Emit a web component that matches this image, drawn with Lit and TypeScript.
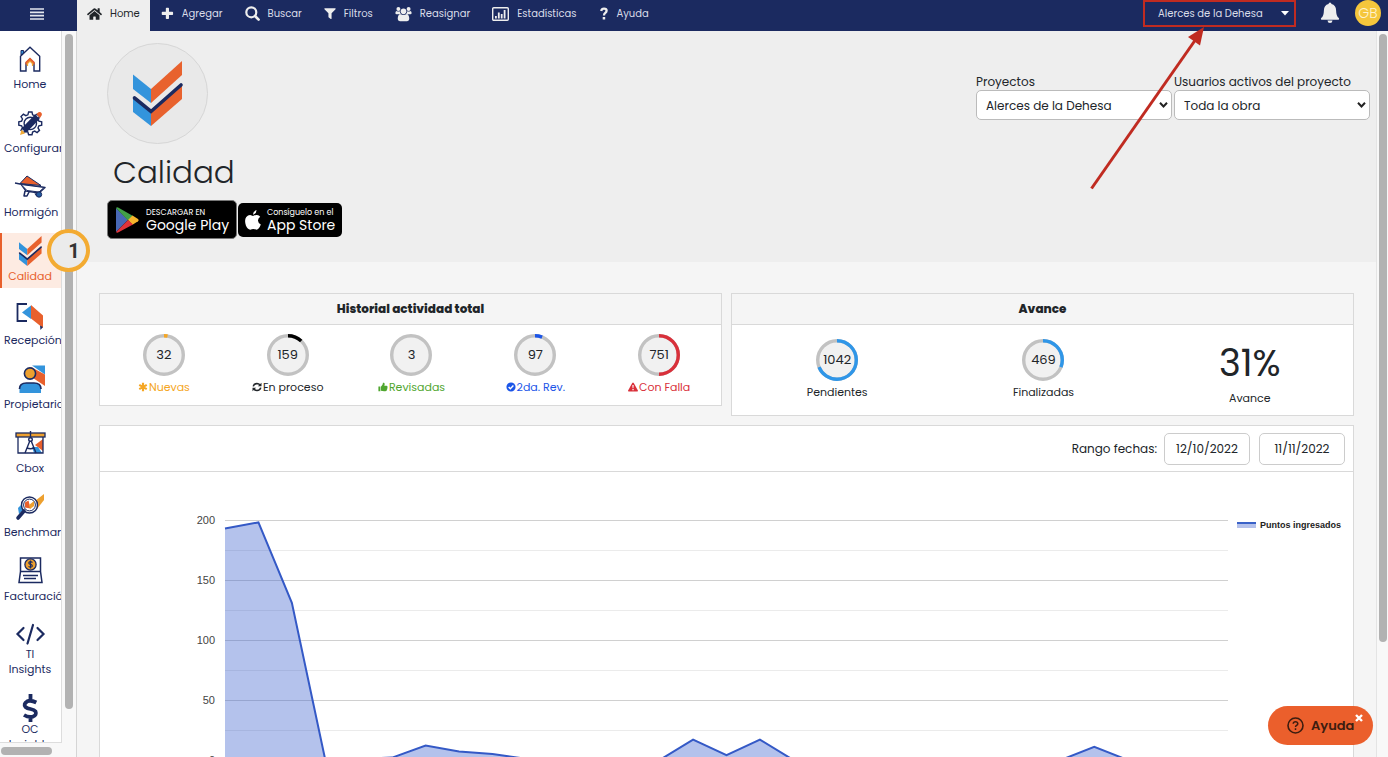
import { LitElement, html, css, svg } from "lit";
import { customElement } from "lit/decorators.js";
import { classMap } from "lit/directives/class-map.js";

const navy = "#1b2a60";
const blue = "#3394dc";
const orange = "#e8602c";
const amber = "#eda02f";

const tabIcon = (w: number, h: number, box: string, body: unknown) =>
  html`<svg width=${w} height=${h} viewBox=${box} fill="currentColor" aria-hidden="true">${body}</svg>`;

const homeIcon = tabIcon(15, 14, "0 0 576 512", svg`<path d="M280.37 148.26L96 300.11V464a16 16 0 0 0 16 16l112.06-.29a16 16 0 0 0 15.92-16V368a16 16 0 0 1 16-16h64a16 16 0 0 1 16 16v95.64a16 16 0 0 0 16 16.05L464 480a16 16 0 0 0 16-16V300L295.67 148.26a12.19 12.19 0 0 0-15.3 0zM571.6 251.47L488 182.56V44.05a12 12 0 0 0-12-12h-56a12 12 0 0 0-12 12v72.61L318.47 43a48 48 0 0 0-61 0L4.34 251.47a12 12 0 0 0-1.6 16.9l25.5 31A12 12 0 0 0 45.15 301l235.22-193.74a12.19 12.19 0 0 1 15.3 0L530.9 301a12 12 0 0 0 16.9-1.6l25.5-31a12 12 0 0 0-1.7-16.93z"/>`);
const plusIcon = tabIcon(13, 13, "0 0 14 14", svg`<path d="M5.2 1.600q0-.8.8-.8h1.800q.8 0 .8.8v3.600h3.600q.8 0 .8.8v1.800q0 .8-.8.8H8.600v3.600q0 .8-.8.8H6q-.8 0-.8-.8V8.600H1.600q-.8 0-.8-.8V6q0-.8.8-.8h3.600z"/>`);
const searchIcon = tabIcon(15, 15, "0 0 15 15", svg`<g fill="none" stroke="currentColor"><circle cx="6.300" cy="6.300" r="5" stroke-width="2.200"/><path d="M10 10l3.600 3.600" stroke-width="2.600" stroke-linecap="round"/></g>`);
const filterIcon = tabIcon(12, 13, "0 0 13 13", svg`<path d="M.9.900h11.200q.9.100.4.900L8.200 6.300v5.700q-.1.900-.9.400L5.200 10.700q-.4-.3-.4-.8V6.300L.5 1.800Q0 1 .9.900z"/>`);
const usersIcon = tabIcon(17, 16, "0 0 18 16", svg`<circle cx="9" cy="5.200" r="3"/><circle cx="3.600" cy="2.600" r="2.100"/><circle cx="14.400" cy="2.600" r="2.100"/><path d="M1.600 4.700q1.700 1 3.500.3 0 2 1.300 3Q4 8 3.200 8.200H1.700Q.4 8.200.4 6.900q0-1.700 1.200-2.200zM16.400 4.700q-1.700 1-3.500.3 0 2-1.300 3 2.400 0 3.200.2h1.500q1.300 0 1.300-1.300 0-1.700-1.200-2.200zM5.800 8q3.200 2 6.400 0 2.900.4 2.900 5.400 0 2.200-2.300 2.200H5.200q-2.300 0-2.300-2.200 0-5 2.900-5.400z"/>`);
const chartIcon = tabIcon(17, 14, "0 0 17 14", svg`<rect x=".7" y=".7" width="15.600" height="12.600" rx="1" fill="none" stroke="currentColor" stroke-width="1.400"/><path d="M3 9h1.800v2.500H3zM5.900 5.500h1.800v6H5.900zM8.800 7h1.800v4.500H8.800zM11.700 3h1.800v8.500h-1.800z"/>`);
const questionIcon = tabIcon(10, 13, "0 0 10 13", svg`<path d="M3.700 10h2.500v2.500H3.700z"/><path d="M2.200 4Q2.700 1.700 5 1.700q2.600 0 2.600 2.100 0 1.300-1.400 2.100Q5 6.600 5 8.400" fill="none" stroke="currentColor" stroke-width="2.300"/>`);

const checkLogo = svg`
  <path d="M0 13.500L18 28V42L0 28z" fill="${blue}"/>
  <path d="M18 28L49 0V14L18 42z" fill="#e8622e"/>
  <path d="M0 37L18 50.500V65L0 51z" fill="${blue}"/>
  <path d="M18 50.500L49 24V38L18 65z" fill="#e8622e"/>
  <path d="M1.500 37L18 50.500L48 24" fill="none" stroke="${navy}" stroke-width="3.600" stroke-linecap="round"/>`;

const nav = [
  { label: ["Home"], art: svg`<path d="M4.500 27V12.300L14 3.200l9.700 9.100V27H18v-8l-4-4-4 4v8z" fill="#fff" stroke="${navy}" stroke-width="1.400"/><path d="M5 11V6.500h2.600V9z" fill="${blue}" stroke="${navy}"/><path d="M10.500 20.500v-2L14 15l3.600 3.500v2" fill="none" stroke="${orange}" stroke-width="2.200"/><path d="M11.500 22v-2.500L14 17l2.500 2.500V22" fill="none" stroke="#f0a62e" stroke-width="1.200"/>` },
  { label: ["Configurar"], art: svg`<g fill="none" stroke="${navy}" stroke-width="1.400"><path d="M12.600 4h3.400l.6 2.800 2.200.9 2.400-1.500 2.300 2.300-1.500 2.500.9 2.100 2.800.7v3.300l-2.800.7-.9 2.100 1.500 2.400-2.400 2.300-2.400-1.500-2.100.9-.6 2.700h-3.400l-.7-2.700-2.100-.9-2.400 1.500L5 22.300l1.500-2.400-.9-2.100-2.800-.7v-3.300l2.800-.7.9-2.100L5 8.500l2.400-2.300 2.400 1.500 2.100-.9z"/><circle cx="14.300" cy="15.400" r="6.200"/></g><path d="M5.500 20.500L19 6.500l4.800 4.300L10 25z" fill="${navy}"/><path d="M20.500 6l2-1.800q2-.7 3.200 1 .8 2-.8 3.300L24 10z" fill="${orange}"/><path d="M5.500 21.700l3.800 3.500L4 27z" fill="#f2aa35"/>` },
  { label: ["Hormigón"], art: svg`<path d="M4 11.500L11 4l14 9.500z" fill="${orange}" stroke="${navy}" stroke-width="1"/><path d="M-1 11l5 1 25 3.500-6 5.500-13-2-5-7M9 19l-1 5h3l2-4m6 1l2 3" fill="none" stroke="${navy}" stroke-width="1.500" stroke-linejoin="round"/><path d="M5 12.500l23 3-5 4.500-12-1.500z" fill="#fff" stroke="${navy}" stroke-width="1"/><circle cx="23" cy="22.500" r="2.700" fill="#235b9e" stroke="${navy}" stroke-width="1"/>` },
  { label: ["Calidad"], active: true, art: svg`<g transform="translate(3 0) scale(.46)">${checkLogo}</g>` },
  { label: ["Recepción"], art: svg`<path d="M11 4H1.500v17H11" fill="none" stroke="${navy}" stroke-width="1.800"/><path d="M6 12.500l9-7v13.500z" fill="${blue}"/><path d="M15 5l12 10.500V28L15 18.500z" fill="${orange}"/><path d="M24 25.500l3 1.500-2.500 3z" fill="${navy}"/>` },
  { label: ["Propietarios"], art: svg`<path d="M16 1.500h13v9z" fill="${blue}"/><path d="M15 3l14 7.500V22L17 14z" fill="${orange}"/><circle cx="14" cy="9.500" r="5.600" fill="${amber}" stroke="${navy}" stroke-width="1.600"/><path d="M3.500 29v-4q0-6 7-6h7.500q7 0 7 6v4z" fill="${blue}"/><path d="M3.500 25q0-6 7-6h7.500q7 0 7 6" fill="none" stroke="${navy}" stroke-width="1.700"/>` },
  { label: ["Cbox"], art: svg`<path d="M27 11v12l-8-6z" fill="${orange}"/><path d="M16 19h6l4 6h-8z" fill="${blue}"/><path d="M2 9v16h25V9" fill="none" stroke="${navy}" stroke-width="1.300"/><rect x="0" y="5" width="29" height="4" fill="${amber}" stroke="${navy}" stroke-width="1.300"/><g fill="none" stroke="${navy}" stroke-width="1.400"><circle cx="14.500" cy="11.500" r="1.800"/><path d="M14.500 3v7M13.800 13L9 25M15.200 13L20 25M11 20q3.500 1.500 7 0"/></g>` },
  { label: ["Benchmark"], art: svg`<path d="M19 9l9-7v6l-7 9z" fill="${amber}"/><path d="M2 16l6-6v7l-5 5z" fill="${blue}"/><circle cx="13.500" cy="13" r="8" fill="#fff" stroke="${navy}" stroke-width="1.400"/><circle cx="13.500" cy="13" r="5.900" fill="#fff" stroke="${navy}"/><path d="M9 10.500l3.500-2 2 8-5.500-1z" fill="${orange}"/><path d="M13 13l5-4v5l-4 3z" fill="${amber}"/><path d="M8 19l-6 7" stroke="${navy}" stroke-width="3.600" stroke-linecap="round"/>` },
  { label: ["Facturación"], art: svg`<g fill="none" stroke="${navy}" stroke-width="1.500"><path d="M4.500 15.500V2h20v13.500M4.500 15.500h20L26 26.500H3zM7 19.500h15M8 22.500h12" /></g><circle cx="14.500" cy="8.500" r="5.600" fill="${amber}" stroke="${navy}" stroke-width="1.300"/><path d="M16.500 6.500q-2-1.500-3.500-.3-.8 1.500 1.500 2.200 2.500.8 1.500 2.200-1.500 1.300-3.500-.2M14.500 4.500v8" fill="none" stroke="${navy}" stroke-width="1.100"/>` },
  { label: ["TI", "Insights"], glyph: true, art: svg`<path d="M7.500 7L1.500 13l6 6M21.500 7l6 6-6 6M17 4l-5.500 18.500" fill="none" stroke="${navy}" stroke-width="2.200" stroke-linecap="round"/>` },
  { label: ["OC", "Insights"], glyph: true, art: svg`<path d="M20.300 6.500Q15 3.800 11.300 5.300 7 8 9.500 11q1.500 1.300 5 2 3.800.8 5 2.400 1.500 3.600-2.500 5.200-4.500 1.200-9-1.600M14.500-2v7M14.500 21v5" fill="none" stroke="${navy}" stroke-width="3.800"/>` },
];

const stats = [
  { value: 32, label: "Nuevas", share: 3, color: "#f5a623", tone: "#f5a623", icon: svg`<path d="M6 .8v10.400M1.500 3.400l9 5.200M10.500 3.400l-9 5.200" stroke="currentColor" stroke-width="2.600"/>` },
  { value: 159, label: "En proceso", share: 12, color: "#000", tone: "#212529", icon: svg`<g fill="none" stroke="currentColor" stroke-width="1.900"><path d="M1.500 5.300Q2.300 2 6 1.800q2 0 3.600 1.700M10.500 6.700Q9.700 10 6 10.200q-2 0-3.600-1.700"/></g><path d="M11.400.8v4.400H7zM.6 11.200V6.800H5z"/>` },
  { value: 3, label: "Revisadas", share: 0, color: "#4fa62f", tone: "#4fa62f", icon: svg`<path d="M.5 5.500h2.300v5.700H.5zM3.500 5.600Q6 3.400 6 1q1.800-.6 2 1.300 0 1-.6 2.300h3q1.500.4.900 1.700.5.900-.2 1.500.3.900-.5 1.500.1 1-.7 1.500-2.800.8-6.400-.2z"/>` },
  { value: 97, label: "2da. Rev.", share: 6, color: "#1b55e8", tone: "#1b55e8", icon: svg`<circle cx="6" cy="6" r="5.500"/><path d="M3.200 6l2 2.100 3.700-3.900" fill="none" stroke="#fff" stroke-width="1.700"/>` },
  { value: 751, label: "Con Falla", share: 50, color: "#d9303a", tone: "#d9303a", icon: svg`<path d="M6 .5q.5 0 .9.600l5 9q.4 1.200-.9 1.300H1Q-.3 11.300.1 10.100l5-9Q5.500.5 6 .5z"/><path d="M5.200 3.700h1.600L6.500 7.600h-1zM5.300 8.500h1.500V10H5.300z" fill="#fff"/>` },
];

const ring = (value: number, share: number, color: string) => html`
  <div class="ring">
    <svg width="42" height="42" viewBox="0 0 42 42" aria-hidden="true">
      <circle cx="21" cy="21" r="19.300" fill="#f1f1f1" stroke="#c2c2c2" stroke-width="3.400"/>
      ${share ? svg`<circle cx="21" cy="21" r="19.300" fill="none" stroke=${color} stroke-width="3.400" pathLength="100" stroke-dasharray="${share} 100" transform="rotate(-90 21 21)"/>` : ""}
    </svg>
    <span>${value}</span>
  </div>`;

const series = [193, 198, 131, 0, 1, 2, 12, 7, 5, 1, 0, 0, 1, 0, 17, 4, 17, 0, 0, 0, 0, 0, 0, 0, 0, 0, 11, 0, 0, 0, 0];
const points = series.map((v, i) => `${(i * 1000) / 30},${240 - v * 1.2}`).join(" ");

@customElement("app-root")
export class AppRoot extends LitElement {
  static styles = css`
    :host { display: flex; flex-direction: column; height: 100vh; overflow: hidden; position: relative;
      font-family: Poppins, Inter, "Open Sans", sans-serif; color: #212529; background: #f5f5f5; }
    * { box-sizing: border-box; }
    svg { display: block; flex: none; overflow: visible; }
    button, select, input { font: inherit; color: inherit; margin: 0; }
    button { border: 0; background: none; padding: 0; }
    h1, h2 { margin: 0; }

    .top { flex: none; display: flex; height: 31px; background: #1b2a60; color: #d9dce8; font-size: 10px; }
    .burger { width: 77px; display: flex; align-items: center; justify-content: center; padding: 0 4px 4px 0; color: #e4e6ee; }
    .tabs { display: flex; flex: 1; }
    .tab { display: flex; align-items: center; gap: 8px; padding: 0 11px 4px; color: inherit; text-decoration: none; }
    .tab svg { color: #eee; }
    .tab.on { background: #eee; color: #212529; padding: 0 10px 4px; }
    .tab.on svg { color: #212529; }
    .account { display: flex; align-items: flex-start; }
    .project { width: 153px; height: 27px; border: 2px solid #c02b21; display: flex; align-items: center; justify-content: space-between; padding: 0 5px 0 13px; }
    .bell { margin: 2px 15px 0 24px; color: #eee; }
    .avatar { width: 26px; height: 26px; border-radius: 50%; background: #f5c63c; color: #fff3cf; display: flex; align-items: center; justify-content: center; font-size: 14px; font-weight: 300; margin-right: 7px; }

    .body { flex: 1; min-height: 0; display: flex; }
    .side { flex: none; width: 77px; display: grid; grid-template-columns: 62px 14px; grid-template-rows: minmax(0, 1fr) 14px; border-right: 1px solid #d5d5d5; background: #f8f8f8; }
    .nav { background: #fff; border-right: 1px solid #ddd; border-bottom: 1px solid #ddd; overflow: hidden; padding-top: 10px; display: flex; flex-direction: column; gap: 9px; }
    .item { flex: none; padding: 3px 5px 4px 4px; color: #1b2a60; text-decoration: none; font-size: 11px; line-height: 16px; text-align: center; white-space: nowrap; display: flex; flex-direction: column; gap: 4px; }
    .item svg { margin: 0 auto; }
    .item.glyph { padding: 4px 5px 6px 4px; gap: 2px; line-height: 15px; }
    .item.on { background: #fdebe2; color: #e8602c; box-shadow: inset 2px 0 #e8602c; }
    .item b { display: block; font-weight: 400; }
    .vbar { padding: 3px 3px 34px; }
    .hbar { padding: 4px 10px 2px 1px; }
    .thumb { display: block; height: 100%; border-radius: 4px; background: #b2b2b2; }

    .main { flex: 1; min-width: 0; overflow: hidden; }
    .hero { background: #eee; display: flex; justify-content: space-between; align-items: flex-start; padding: 12px 6px 23px 30px; }
    .logo { width: 101px; height: 101px; border-radius: 50%; border: 1px solid #d6d6d6; background: #e9e9e9; display: flex; align-items: center; justify-content: center; }
    h1 { font-size: 31px; line-height: 40px; font-weight: 300; padding-left: 6px; margin: 8px 0; }
    .stores { display: flex; align-items: center; gap: 1px; }
    .store { display: flex; align-items: center; gap: 6px; height: 34px; width: 104px; background: #000; color: #fff; border-radius: 5px; padding: 0 7px; text-decoration: none; font-size: 14px; line-height: 14px; white-space: nowrap; }
    .store.play { height: 39px; width: 130px; border: 1px solid #777; padding: 0 8px; gap: 7px; }
    .store b { display: block; font-weight: 400; }
    .store small { display: block; font-size: 8px; line-height: 10px; }
    .filters { display: flex; gap: 2px; padding-top: 30px; }
    .field { width: 196px; font-size: 12px; line-height: 17px; white-space: nowrap; }
    .pick { position: relative; display: block; }
    .pick select { appearance: none; width: 100%; height: 30px; border: 1px solid #bbb; border-radius: 5px; background: #fff; padding: 0 24px 0 9px; }
    .pick svg { position: absolute; right: 4px; top: 12px; pointer-events: none; }

    .content { padding: 31px 22px 0; display: flex; flex-direction: column; gap: 9px; }
    .cards { display: grid; grid-template-columns: 1fr 1fr; gap: 9px; align-items: start; }
    .card { background: #fff; border: 1px solid #d9d9d9; min-width: 0; }
    h2 { background: #f5f5f5; border-bottom: 1px solid #d9d9d9; font-size: 12px; font-weight: 800; line-height: 30px; text-align: center; }
    .row { display: grid; grid-auto-flow: column; grid-auto-columns: 1fr; padding: 9px 0 9px 2px; }
    .stat { display: flex; flex-direction: column; align-items: center; gap: 2px; font-size: 11px; line-height: 18px; white-space: nowrap; }
    .stat p { margin: 0; display: flex; align-items: center; gap: 1px; }
    .row.progress { padding: 14px 0 8px 2px; }
    .ring { position: relative; width: 42px; height: 42px; }
    .ring span { position: absolute; inset: 0; display: flex; align-items: center; justify-content: center; font-size: 13px; color: #212529; }
    .big { font-size: 37px; line-height: 48px; }

    .range { height: 46px; border-bottom: 1px solid #d9d9d9; display: flex; align-items: center; justify-content: flex-end; font-size: 12px; padding-right: 8px; }
    .range input { width: 86px; height: 32px; border: 1px solid #ccc; border-radius: 5px; background: #fff; text-align: center; padding: 0; }
    .range label { margin-right: 7px; }
    .range input + input { margin-left: 9px; }
    .chart { display: grid; grid-template-columns: 115px minmax(0, 1fr) 125px; padding: 48px 0 20px; }
    .axis { font: 11px/12px "Liberation Sans", Arial, sans-serif; color: #444; text-align: right; margin-top: -6px; }
    .axis div { height: 60px; }
    .plot { min-width: 0; margin-left: 10px; }
    .plot svg { width: 100%; height: 240px; }
    .legend { display: flex; align-items: flex-start; gap: 4px; padding-left: 9px; font: bold 9px/10px "Liberation Sans", Arial, sans-serif; color: #222; white-space: nowrap; }
    .swatch { width: 19px; height: 6px; border-top: 2px solid #3a62c8; background: #b4c1eb; margin-top: 2px; }

    .rail { flex: none; width: 12px; background: #f8f8f8; border-left: 1px solid #e4e4e4; padding: 3px 1px 115px 2px; }

    .step { position: absolute; left: 47px; top: 229px; width: 43px; height: 43px; border: 4px solid #f3ab32; border-radius: 50%; background: #ebebeb; display: flex; align-items: center; justify-content: center; padding-left: 11px; font: bold 20px/1 Roboto, sans-serif; color: #333; }
    .arrow { position: absolute; right: 180px; top: 26px; pointer-events: none; }
    .help { position: absolute; right: 15px; bottom: 12px; width: 105px; height: 39px; border-radius: 20px; background: #eb5f2c; color: #3d1d10; display: flex; align-items: center; gap: 7px; padding-left: 19px; font-weight: 600; font-size: 13px; }
    .close { position: absolute; right: 10px; top: 8px; color: #fff; }
  `;

  render() {
    const tabs = [
      ["Home", homeIcon], ["Agregar", plusIcon], ["Buscar", searchIcon], ["Filtros", filterIcon],
      ["Reasignar", usersIcon], ["Estadísticas", chartIcon], ["Ayuda", questionIcon],
    ] as const;
    return html`
      <header class="top">
        <button class="burger" aria-label="Menú">
          <svg width="14" height="12" viewBox="0 0 14 12"><path d="M0 1h14M0 4.300h14M0 7.700h14M0 11h14" stroke="currentColor" stroke-width="1.700"/></svg>
        </button>
        <nav class="tabs">
          ${tabs.map(([name, icon], i) => html`<a href="#" class=${classMap({ tab: true, on: i === 0 })}>${icon}${name}</a>`)}
        </nav>
        <div class="account">
          <button class="project">Alerces de la Dehesa
            <svg width="8" height="5" viewBox="0 0 8 5"><path d="M0 0h8L4 4.500z" fill="#fff"/></svg>
          </button>
          <button class="bell" aria-label="Notificaciones">
            <svg width="20" height="21" viewBox="0 0 20 21" fill="currentColor"><path d="M10 .5q1.300 0 1.500 1.500 4.500 1 4.600 6.500.1 6 2.700 7.500.8 1-.2 1.800H1.400q-1-.8-.2-1.800Q3.800 14.500 3.900 8.500 4 3 8.500 2 8.700.5 10 .5zM7.500 18.500h5Q12.300 21 10 21t-2.500-2.500z"/></svg>
          </button>
          <button class="avatar">GB</button>
        </div>
      </header>

      <div class="body">
        <aside class="side">
          <nav class="nav">
            ${nav.map((n) => html`<a href="#" class=${classMap({ item: true, on: !!n.active, glyph: !!n.glyph })}>
              <svg width="29" height=${n.glyph ? 24 : 28} viewBox="0 0 29 ${n.glyph ? 24 : 28}" aria-hidden="true">${n.art}</svg>
              <span>${n.label.map((l) => html`<b>${l}</b>`)}</span></a>`)}
          </nav>
          <div class="vbar"><span class="thumb"></span></div>
          <div class="hbar"><span class="thumb"></span></div>
        </aside>

        <main class="main">
          <section class="hero">
            <div>
              <div class="logo"><svg width="49" height="65" viewBox="0 0 49 65">${checkLogo}</svg></div>
              <h1>Calidad</h1>
              <div class="stores">
                <a href="#" class="store play">
                  <svg width="23" height="26" viewBox="0 0 23 26"><path d="M0 1v24l12-12z" fill="#4968b5"/><path d="M0 1q1-1.500 3 0l14 8-5 4.500z" fill="#43a047"/><path d="M16.500 8.500L22 12q1.500 1.200 0 2.300l-5.500 3.400L12 13z" fill="#f7b52c"/><path d="M0 25q1 1.500 3 0l14-7.500-5-4.500z" fill="#e0333a"/></svg>
                  <span><small>DESCARGAR EN</small><b>Google Play</b></span>
                </a>
                <a href="#" class="store">
                  <svg width="16" height="20" viewBox="0 0 16 20" fill="#fff"><path d="M11.500 0q.2 3.500-3.500 4.800Q7.800 1.500 11.500 0zM8 6q2-1.200 4-1 2 .2 3.200 1.800-2.400 1.600-2.200 4 .2 2.600 2.800 3.700-1.800 5-4.300 5.200-1.700-.7-3.200-.7t-3 .7Q2.500 19.500.9 15.500-.9 10 1.300 7 3 4.900 5.200 5 6.700 5.500 8 6z"/></svg>
                  <span><small>Consíguelo en el</small><b>App Store</b></span>
                </a>
              </div>
            </div>
            <div class="filters">
              ${[["proyectos", "Proyectos", "Alerces de la Dehesa"], ["usuarios", "Usuarios activos del proyecto", "Toda la obra"]].map(([id, label, value]) => html`
                <div class="field">
                  <label for=${id}>${label}</label>
                  <span class="pick">
                    <select id=${id}><option>${value}</option></select>
                    <svg width="9" height="6" viewBox="0 0 9 6"><path d="M1 .8l3.500 3.700L8 .8" fill="none" stroke="#222" stroke-width="2"/></svg>
                  </span>
                </div>`)}
            </div>
          </section>

          <div class="content">
            <div class="cards">
              <section class="card">
                <h2>Historial actividad total</h2>
                <div class="row">
                  ${stats.map((s) => html`<div class="stat">
                    ${ring(s.value, s.share, s.color)}
                    <p style="color:${s.tone}"><svg width="10" height="10" viewBox="0 0 12 12" fill="currentColor" aria-hidden="true">${s.icon}</svg>${s.label}</p>
                  </div>`)}
                </div>
              </section>
              <section class="card">
                <h2>Avance</h2>
                <div class="row progress">
                  <div class="stat">${ring(1042, 69, "#2f96e8")}<p>Pendientes</p></div>
                  <div class="stat">${ring(469, 31, "#2f96e8")}<p>Finalizadas</p></div>
                  <div class="stat"><span class="big">31%</span><p>Avance</p></div>
                </div>
              </section>
            </div>

            <section class="card">
              <div class="range">
                <label for="desde">Rango fechas:</label>
                <input id="desde" type="text" value="12/10/2022">
                <input type="text" aria-label="Hasta" value="11/11/2022">
              </div>
              <div class="chart">
                <div class="axis">${[200, 150, 100, 50, 0].map((v) => html`<div>${v}</div>`)}</div>
                <div class="plot">
                  <svg viewBox="0 0 1000 240" preserveAspectRatio="none" role="img" aria-label="Puntos ingresados">
                    ${[0, 1, 2, 3, 4, 5, 6, 7, 8].map((i) => svg`<path d="M0 ${i * 30}H1000" stroke=${i % 2 ? "#ebebeb" : "#d0d0d0"} stroke-width="1" vector-effect="non-scaling-stroke" shape-rendering="crispEdges"/>`)}
                    <polygon points="0,240 ${points} 1000,240" fill="#3a5fcd" fill-opacity=".38"/>
                    <polyline points=${points} fill="none" stroke="#3459c6" stroke-width="2" vector-effect="non-scaling-stroke"/>
                  </svg>
                </div>
                <div class="legend"><span class="swatch"></span>Puntos ingresados</div>
              </div>
            </section>
          </div>
        </main>
        <div class="rail"><span class="thumb"></span></div>
      </div>

      <div class="step">1</div>
      <svg class="arrow" width="120" height="165" viewBox="0 0 120 165" aria-hidden="true">
        <path d="M3.500 162.500L108 13" stroke="#c02b21" stroke-width="3"/><path d="M116 1l-4 18.500L100 11z" fill="#c02b21"/>
      </svg>
      <button class="help">
        <svg width="17" height="17" viewBox="0 0 17 17"><circle cx="8.500" cy="8.500" r="7.500" fill="none" stroke="currentColor" stroke-width="1.600"/><path d="M6.200 6.800q.2-2 2.300-2t2.300 1.900q0 1.100-1.300 1.700-1 .6-1 1.700M8.500 11.300v1.700" fill="none" stroke="currentColor" stroke-width="1.500"/></svg>
        Ayuda
        <svg class="close" width="8" height="8" viewBox="0 0 8 8"><path d="M1 1l6 6M7 1L1 7" stroke="currentColor" stroke-width="2.400"/></svg>
      </button>
    `;
  }
}
